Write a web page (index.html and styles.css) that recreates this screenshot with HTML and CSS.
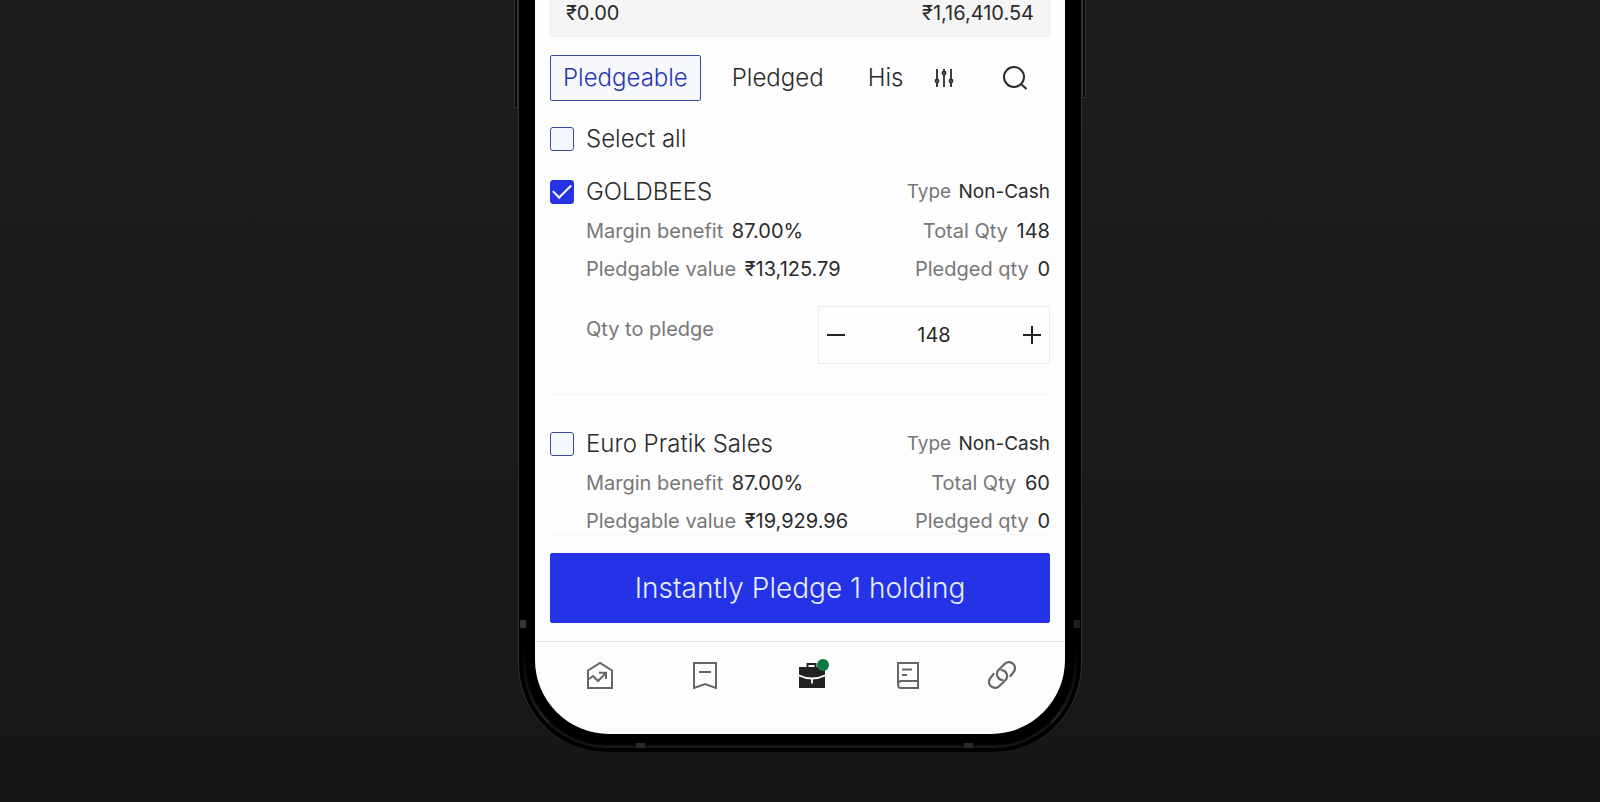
FILE: index.html
```
<!DOCTYPE html>
<html lang="en">
<head>
    <meta charset="UTF-8">
    <meta name="viewport" content="width=device-width, initial-scale=1.0">
    <title>Pledge Holdings</title>
    <link rel="stylesheet" href="styles.css">
</head>
<body>
    <div class="phone">
        <span class="band band-left"></span>
        <span class="band band-right"></span>
        <span class="band band-bottom-left"></span>
        <span class="band band-bottom-right"></span>
        <span class="side-key side-key-left"></span>
        <span class="side-key side-key-right"></span>
        <div class="screen">
            <!-- Balance summary -->
            <div class="summary">
                <span>₹0.00</span>
                <span>₹1,16,410.54</span>
            </div>

            <!-- Tabs -->
            <div class="toolbar">
                <div class="tabs">
                    <button class="tab active">Pledgeable</button>
                    <button class="tab">Pledged</button>
                    <button class="tab tab-cut">His</button>
                </div>
                <div class="tools">
                    <button class="icon-btn" aria-label="Filter">
                        <svg width="20" height="20" viewBox="0 0 20 20" fill="none" stroke="#2b2b2b" stroke-width="1.8">
                            <path d="M3 1v10M3 15v4M10 1v2M10 7v12M17 1v10M17 15v4"/>
                            <circle cx="3" cy="13" r="1.5"/>
                            <circle cx="10" cy="5" r="1.5"/>
                            <circle cx="17" cy="13" r="1.5"/>
                        </svg>
                    </button>
                    <button class="icon-btn" aria-label="Search">
                        <svg width="26" height="26" viewBox="0 0 26 26" fill="none" stroke="#2b2b2b" stroke-width="2">
                            <circle cx="12" cy="12" r="10"/>
                            <path d="M19 19l5.5 5"/>
                        </svg>
                    </button>
                </div>
            </div>

            <!-- Holdings -->
            <label class="select-all">
                <input type="checkbox" class="check">
                <span class="name">Select all</span>
            </label>

            <div class="holding">
                <div class="holding-head">
                    <label class="holding-label">
                        <input type="checkbox" class="check" checked>
                        <span class="name">GOLDBEES</span>
                    </label>
                    <div class="field type">Type <b>Non-Cash</b></div>
                </div>
                <div class="row">
                    <div class="field">Margin benefit <b>87.00%</b></div>
                    <div class="field">Total Qty <b>148</b></div>
                </div>
                <div class="row">
                    <div class="field">Pledgable value <b>₹13,125.79</b></div>
                    <div class="field">Pledged qty <b>0</b></div>
                </div>
                <div class="qty-row">
                    <label class="field" for="qty">Qty to pledge</label>
                    <div class="stepper">
                        <button class="step-btn" aria-label="Decrease">
                            <svg width="18" height="18" viewBox="0 0 18 18" stroke="#222" stroke-width="2"><path d="M0 9h18"/></svg>
                        </button>
                        <input id="qty" type="text" value="148">
                        <button class="step-btn" aria-label="Increase">
                            <svg width="18" height="18" viewBox="0 0 18 18" stroke="#222" stroke-width="2"><path d="M0 9h18M9 0v18"/></svg>
                        </button>
                    </div>
                </div>
            </div>

            <div class="holding">
                <div class="holding-head">
                    <label class="holding-label">
                        <input type="checkbox" class="check">
                        <span class="name">Euro Pratik Sales</span>
                    </label>
                    <div class="field type">Type <b>Non-Cash</b></div>
                </div>
                <div class="row">
                    <div class="field">Margin benefit <b>87.00%</b></div>
                    <div class="field">Total Qty <b>60</b></div>
                </div>
                <div class="row">
                    <div class="field">Pledgable value <b>₹19,929.96</b></div>
                    <div class="field">Pledged qty <b>0</b></div>
                </div>
            </div>

            <div class="action">
                <button class="pledge-btn">Instantly Pledge 1 holding</button>
            </div>

            <!-- Bottom navigation -->
            <nav class="nav">
                <a href="#" aria-label="Home">
                    <svg width="28" height="28" viewBox="0 0 28 28" fill="none" stroke="#666" stroke-width="2">
                        <path d="M2 9.5L14 2l12 7.5V27H2z"/>
                        <path d="M3 18l4-3 5 5 8-8M13 11.8h7V18"/>
                    </svg>
                </a>
                <a href="#" aria-label="Watchlist">
                    <svg width="28" height="28" viewBox="0 0 28 28" fill="none" stroke="#666" stroke-width="2">
                        <path d="M3 2h22v25l-11-4-11 4z"/>
                        <path d="M8 11h12"/>
                    </svg>
                </a>
                <a href="#" class="current" aria-label="Portfolio">
                    <svg width="28" height="28" viewBox="0 0 28 28" fill="none">
                        <path d="M1 6h26v21H1z" fill="#222"/>
                        <path d="M9.5 6V3h8v3" stroke="#222" stroke-width="2"/>
                        <path d="M0 14q14 7 28 0M14 17v5.5" stroke="#fff" stroke-width="1.8"/>
                    </svg>
                    <span class="dot"></span>
                </a>
                <a href="#" aria-label="Orders">
                    <svg width="28" height="28" viewBox="0 0 28 28" fill="none" stroke="#666" stroke-width="2">
                        <path d="M4 24V2h20v25H7q-3 0-3-3.5 0-3.5 3-3.5h17"/>
                        <path d="M8 8.500h10M8 14h5"/>
                    </svg>
                </a>
                <a href="#" aria-label="Links">
                    <svg width="28" height="28" viewBox="0 0 28 28" fill="none" stroke="#666" stroke-width="2.2" stroke-linecap="round">
                        <path d="M22.500 15L25.200 11.400A6 6 0 0 0 16.800 2.800L10.500 9A6 6 0 0 0 14.500 19"/>
                        <path d="M5.500 13L2.800 16.600A6 6 0 0 0 11.200 25.200L17.500 19A6 6 0 0 0 13.500 9"/>
                    </svg>
                </a>
            </nav>
        </div>
    </div>
</body>
</html>
```
FILE: styles.css
```
* {
    margin: 0;
    padding: 0;
    box-sizing: border-box;
}

body {
    min-height: 100vh;
    background: linear-gradient(#1e1e1e, #171717);
    color: #2b2b2b;
    font-family: Inter, "Noto Sans", sans-serif;
    font-size: 20px;
    line-height: 38px;
}

button, input {
    font: inherit;
    color: inherit;
    background: none;
    border: none;
}

button {
    cursor: pointer;
}

svg {
    display: block;
}

/* Phone body */
.phone {
    position: relative;
    width: 100%;
    max-width: 564px;
    margin: 0 auto;
    padding: 0 16px 18px;
    background: #000;
    border: 1px solid #333;
    border-width: 0 1px;
    border-radius: 0 0 88px 88px;
}

/* Light catching the lower rim */
.phone::before {
    content: "";
    position: absolute;
    inset: auto 4px 4px;
    height: 100px;
    border: solid #555;
    border-width: 0 2px 2px;
    border-bottom-color: #2a2a2a;
    border-radius: 0 0 84px 84px;
    filter: blur(1px);
    mask-image: linear-gradient(transparent, #000);
}

.screen {
    position: relative;
    background: #fdfdfd;
    border-radius: 0 0 74px 74px;
    overflow: hidden;
}

.band {
    position: absolute;
    background: #333;
}

.band-left, .band-right {
    width: 6px;
    height: 8px;
    bottom: 124px;
}

.band-left {
    left: 1px;
}

.band-right {
    right: 1px;
    background: #1e1e1e;
}

.band-bottom-left, .band-bottom-right {
    width: 9px;
    height: 5px;
    bottom: 4px;
    background: #2a2a2a;
}

.band-bottom-left {
    left: 117px;
}

.band-bottom-right {
    right: 108px;
}

.side-key {
    position: absolute;
    top: 0;
    width: 4px;
    height: 108px;
    background: #0a0a0a;
    border: 1px solid #333;
    border-top: none;
}

.side-key-left {
    left: -5px;
}

.side-key-right {
    right: -5px;
    height: 98px;
}

/* Summary */
.summary {
    display: flex;
    justify-content: space-between;
    margin: 0 15px;
    padding: 0 15px;
    height: 37px;
    line-height: 26px;
    background: #f5f5f5;
    border: 1px solid #ededed;
    border-top: none;
}

/* Tabs */
.toolbar {
    display: flex;
    align-items: center;
    justify-content: space-between;
    margin: 18px 37px 0 15px;
}

.tabs {
    display: flex;
    gap: 16px;
}

.tools {
    display: flex;
    align-items: center;
    gap: 48px;
}

.tab {
    height: 46px;
    padding: 0 14px;
    font-size: 24px;
    font-weight: 350;
    line-height: 42px;
    border: 1px solid transparent;
    border-radius: 2px;
}

.tab.active {
    padding: 0 12px;
    color: #2a37b5;
    background: #f6f8fb;
    border-color: #3c48a8;
}

.tab-cut {
    padding: 0 0 0 12px;
}

/* Checkboxes */
.check {
    appearance: none;
    flex: none;
    width: 24px;
    height: 24px;
    background: #f4f8fe;
    border: 1px solid #3c48a8;
    border-radius: 3px;
}

.check:checked {
    display: grid;
    place-items: center;
    background: #2433e6;
    border-color: #2433e6;
}

.check:checked::before {
    content: "";
    width: 16px;
    height: 8px;
    border: solid #fff;
    border-width: 0 0 2px 2px;
    transform: translateY(-3px) rotate(-45deg);
}

.select-all, .holding-label {
    display: flex;
    align-items: center;
    gap: 12px;
}

.select-all {
    margin: 19px 15px 0;
}

.name {
    font-size: 24px;
    font-weight: 350;
}

/* Holdings */
.holding {
    margin: 0 15px;
    padding-top: 15px;
}

.holding + .holding {
    padding-top: 30px;
}

.holding-head, .row, .qty-row {
    display: flex;
    justify-content: space-between;
}

.holding-head {
    margin-bottom: 1px;
}

.row, .qty-row {
    padding-left: 36px;
}

.field {
    color: #777;
}

.field b {
    margin-left: 3px;
    color: #2b2b2b;
    font-weight: 400;
}

.type {
    font-size: 19px;
}

.type b {
    margin-left: 2px;
}

.qty-row {
    padding-top: 18px;
    padding-bottom: 30px;
}

.qty-row .field {
    line-height: 46px;
}

.holding:has(.qty-row) {
    border-bottom: 1px solid #f4f4f4;
}

.stepper {
    display: flex;
    align-items: center;
    width: 232px;
    height: 58px;
    padding: 0 8px;
    border: 1px solid #ebebeb;
}

.stepper input {
    flex: 1;
    min-width: 0;
    text-align: center;
}

/* Pledge button */
.action {
    margin: 0 15px;
    padding: 18px 0;
    border-top: 1px solid #f4f4f4;
}

.holding + .action {
    margin-top: -6px;
}

.pledge-btn {
    display: block;
    width: 100%;
    height: 70px;
    color: #e8edff;
    font-size: 28px;
    font-weight: 300;
    background: #2433e6;
    border-radius: 2px;
}

/* Bottom navigation */
.nav {
    display: grid;
    grid-template-columns: 105fr 107fr 96fr 94fr 28px;
    padding: 19px 49px 45px 51px;
    border-top: 1px solid #e6e6e6;
}

.nav a {
    position: relative;
    width: 28px;
}

.dot {
    position: absolute;
    top: -2px;
    right: -3px;
    width: 12px;
    height: 12px;
    border-radius: 50%;
    background: #0c7a3e;
}
```
